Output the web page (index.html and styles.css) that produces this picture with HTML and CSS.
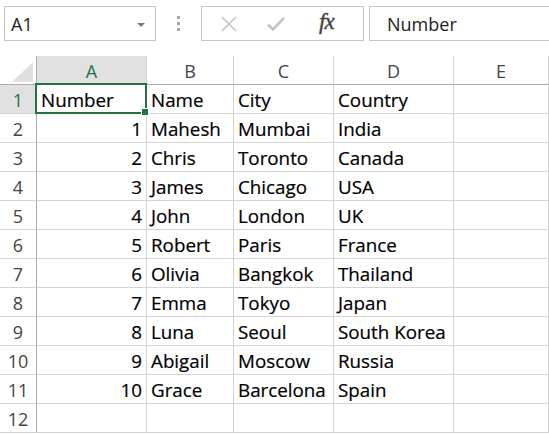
FILE: index.html
```html
<!DOCTYPE html>
<html lang="en">
<head>
    <meta charset="UTF-8">
    <meta name="viewport" content="width=device-width, initial-scale=1.0">
    <title>Sheet1</title>
    <link rel="stylesheet" href="styles.css">
</head>
<body>
    <div class="toolbar">
        <div class="name-box">
            <span>A1</span>
            <span class="caret"></span>
        </div>
        <div class="grip">
            <span></span><span></span><span></span>
        </div>
        <div class="fx-buttons">
            <svg class="btn-icon" width="18" height="18" viewBox="0 0 18 18">
                <path d="M2 2 L16 16 M16 2 L2 16" stroke="#c4c4c4" stroke-width="1.6" fill="none"/>
            </svg>
            <svg class="btn-icon" width="18" height="18" viewBox="0 0 18 18">
                <path d="M1 9.5 L6 14.5 L17 3" stroke="#c4c4c4" stroke-width="2.6" fill="none"/>
            </svg>
            <span class="fx"><i>f</i><i>x</i></span>
        </div>
        <div class="formula-box">Number</div>
    </div>

    <div class="sheet">
        <div class="corner"><span class="corner-tri"></span></div>
        <div class="col-head selected">A</div>
        <div class="col-head">B</div>
        <div class="col-head">C</div>
        <div class="col-head">D</div>
        <div class="col-head">E</div>

        <div class="row-head selected">1</div>
        <div class="cell active">Number</div>
        <div class="cell">Name</div>
        <div class="cell">City</div>
        <div class="cell">Country</div>
        <div class="cell"></div>

        <div class="row-head">2</div>
        <div class="cell num">1</div>
        <div class="cell">Mahesh</div>
        <div class="cell">Mumbai</div>
        <div class="cell">India</div>
        <div class="cell"></div>

        <div class="row-head">3</div>
        <div class="cell num">2</div>
        <div class="cell">Chris</div>
        <div class="cell">Toronto</div>
        <div class="cell">Canada</div>
        <div class="cell"></div>

        <div class="row-head">4</div>
        <div class="cell num">3</div>
        <div class="cell">James</div>
        <div class="cell">Chicago</div>
        <div class="cell">USA</div>
        <div class="cell"></div>

        <div class="row-head">5</div>
        <div class="cell num">4</div>
        <div class="cell">John</div>
        <div class="cell">London</div>
        <div class="cell">UK</div>
        <div class="cell"></div>

        <div class="row-head">6</div>
        <div class="cell num">5</div>
        <div class="cell">Robert</div>
        <div class="cell">Paris</div>
        <div class="cell">France</div>
        <div class="cell"></div>

        <div class="row-head">7</div>
        <div class="cell num">6</div>
        <div class="cell">Olivia</div>
        <div class="cell">Bangkok</div>
        <div class="cell">Thailand</div>
        <div class="cell"></div>

        <div class="row-head">8</div>
        <div class="cell num">7</div>
        <div class="cell">Emma</div>
        <div class="cell">Tokyo</div>
        <div class="cell">Japan</div>
        <div class="cell"></div>

        <div class="row-head">9</div>
        <div class="cell num">8</div>
        <div class="cell">Luna</div>
        <div class="cell">Seoul</div>
        <div class="cell">South Korea</div>
        <div class="cell"></div>

        <div class="row-head">10</div>
        <div class="cell num">9</div>
        <div class="cell">Abigail</div>
        <div class="cell">Moscow</div>
        <div class="cell">Russia</div>
        <div class="cell"></div>

        <div class="row-head">11</div>
        <div class="cell num">10</div>
        <div class="cell">Grace</div>
        <div class="cell">Barcelona</div>
        <div class="cell">Spain</div>
        <div class="cell"></div>

        <div class="row-head">12</div>
        <div class="cell"></div>
        <div class="cell"></div>
        <div class="cell"></div>
        <div class="cell"></div>
        <div class="cell"></div>
    </div>
</body>
</html>
```

FILE: styles.css
```css
* {
    box-sizing: border-box;
}
body {
    margin: 0;
    background: #fff;
    font-family: "Open Sans", "Noto Sans", sans-serif;
    color: #000;
    overflow: hidden;
}

/* formula bar */
.toolbar {
    display: flex;
    align-items: stretch;
    height: 41px;
    padding-top: 6px;
    padding-left: 4px;
}
.name-box {
    width: 152px;
    border: 1px solid #c6c6c6;
    display: flex;
    align-items: center;
    justify-content: space-between;
    padding: 0 10px 0 6px;
    font-size: 18px;
    color: #222;
}
.caret {
    width: 0;
    height: 0;
    border-left: 4px solid transparent;
    border-right: 4px solid transparent;
    border-top: 4px solid #7a7a7a;
    margin-top: 2px;
}
.grip {
    width: 45px;
    display: flex;
    flex-direction: column;
    align-items: center;
    justify-content: center;
    gap: 3px;
}
.grip span {
    width: 3px;
    height: 3px;
    background: #a6a6a6;
}
.fx-buttons {
    width: 163px;
    border: 1px solid #c6c6c6;
    display: flex;
    align-items: center;
    padding-left: 18px;
    gap: 29px;
}
.btn-icon {
    flex: none;
}
.fx {
    font-family: "Liberation Serif", "DejaVu Serif", serif;
    font-size: 23px;
    color: #444;
    margin-left: 5px;
    letter-spacing: -1px;
    margin-top: -3px;
    -webkit-text-stroke: 0.4px #444;
}
.formula-box {
    flex: 1;
    margin-left: 5px;
    border: 1px solid #c6c6c6;
    border-right: none;
    display: flex;
    align-items: center;
    padding-left: 17px;
    font-size: 18px;
    color: #222;
}

/* grid */
.sheet {
    margin-top: 15px;
    display: grid;
    grid-template-columns: 37px 110px 87px 100px 120px 1fr;
    grid-template-rows: 29px repeat(12, 29px);
}
.corner {
    border-right: 1px solid #ababab;
    border-bottom: 1px solid #ababab;
    position: relative;
}
.corner-tri {
    position: absolute;
    right: 3px;
    bottom: 2px;
    width: 0;
    height: 0;
    border-left: 21px solid transparent;
    border-bottom: 20px solid #dfdfdf;
}
.col-head {
    border-right: 1px solid #d4d4d4;
    border-bottom: 1px solid #ababab;
    display: flex;
    align-items: center;
    justify-content: center;
    font-size: 18px;
    color: #444;
    padding-top: 1px;
}
.row-head {
    border-right: 1px solid #ababab;
    border-bottom: 1px solid #d4d4d4;
    display: flex;
    align-items: center;
    justify-content: center;
    font-size: 18px;
    color: #444;
    padding-top: 1px;
}
.col-head.selected,
.row-head.selected {
    background: #e1e1e1;
    color: #217346;
}
.cell {
    border-right: 1px solid #d4d4d4;
    border-bottom: 1px solid #d4d4d4;
    display: flex;
    align-items: center;
    padding: 1px 4px 0;
    font-size: 18.8px;
    white-space: nowrap;
    -webkit-text-stroke: 0.2px #000;
}
.cell.num {
    justify-content: flex-end;
}
.cell.active {
    position: relative;
}
.cell.active::before {
    content: "";
    position: absolute;
    left: -2px;
    top: -2px;
    right: -1px;
    bottom: -1px;
    border: 2px solid #217346;
}
.cell.active::after {
    content: "";
    position: absolute;
    right: -3px;
    bottom: -3px;
    width: 6px;
    height: 6px;
    background: #217346;
    border: 1px solid #fff;
    box-sizing: content-box;
    z-index: 1;
}
```
